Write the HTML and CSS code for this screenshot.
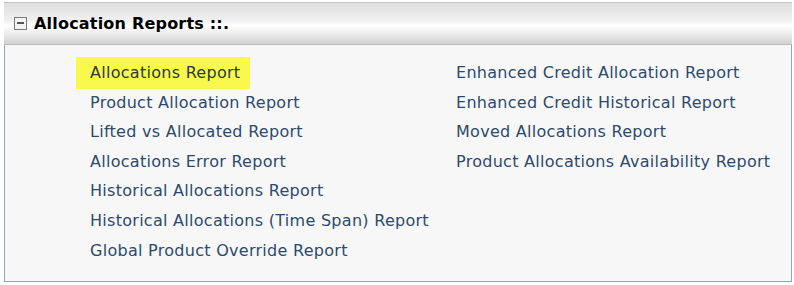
FILE: index.html
```html
<!DOCTYPE html>
<html lang="en">
<head>
    <meta charset="UTF-8">
    <title>Allocation Reports</title>
    <link rel="stylesheet" href="styles.css">
</head>
<body>

    <div class="panel">
        <div class="panel-header">
            <span class="toggle"></span>
            <h2>Allocation Reports ::.</h2>
        </div>

        <div class="panel-body">
            <ul class="report-list">
                <li><a href="#" class="current">Allocations Report</a></li>
                <li><a href="#">Product Allocation Report</a></li>
                <li><a href="#">Lifted vs Allocated Report</a></li>
                <li><a href="#">Allocations Error Report</a></li>
                <li><a href="#">Historical Allocations Report</a></li>
                <li><a href="#">Historical Allocations (Time Span) Report</a></li>
                <li><a href="#">Global Product Override Report</a></li>
            </ul>
            <ul class="report-list">
                <li><a href="#">Enhanced Credit Allocation Report</a></li>
                <li><a href="#">Enhanced Credit Historical Report</a></li>
                <li><a href="#">Moved Allocations Report</a></li>
                <li><a href="#">Product Allocations Availability Report</a></li>
            </ul>
        </div>
    </div>

</body>
</html>
```

FILE: styles.css
```css
body {
    font-family: "DejaVu Sans", Verdana, sans-serif;
    background-color: #ffffff;
    margin: 0;
    padding: 2px 2px 0 4px;
}
.panel {
    width: 788px;
}
.panel-header {
    display: flex;
    align-items: center;
    height: 41px;
    padding-left: 10px;
    border-top: 1px solid #c4c4c4;
    border-bottom: 1px solid #bdbdbd;
    background: linear-gradient(to bottom, #dedede 0%, #f2f2f2 45%, #ffffff 55%, #e6e6e6 80%, #d2d2d2 100%);
}
.toggle {
    width: 11px;
    height: 11px;
    border: 1px solid #7a7a7a;
    background: #f4f4f4;
    margin-right: 7px;
    position: relative;
}
.toggle::after {
    content: "";
    position: absolute;
    left: 2px;
    top: 4px;
    width: 7px;
    height: 2px;
    background: #555555;
}
.panel-header h2 {
    margin: 0;
    font-size: 16px;
    letter-spacing: 0.2px;
    font-weight: bold;
    color: #000000;
}
.panel-body {
    display: flex;
    height: 237px;
    background: #f7f7f7;
    border: 1px solid #93a5b6;
    border-top: none;
    padding: 12px 0 0 71px;
    box-sizing: border-box;
}
.report-list {
    list-style: none;
    margin: 0;
    padding: 0;
    flex: 0 0 366px;
}
.report-list li {
    height: 29.6px;
}
.report-list a {
    display: inline-block;
    padding: 6px 10px 6px 14px;
    font-size: 16px;
    letter-spacing: 0.28px;
    line-height: 20px;
    color: #2c4a6e;
    text-decoration: none;
}
.report-list a.current {
    background: #f9f94d;
    color: #2b3a3a;
}
```
